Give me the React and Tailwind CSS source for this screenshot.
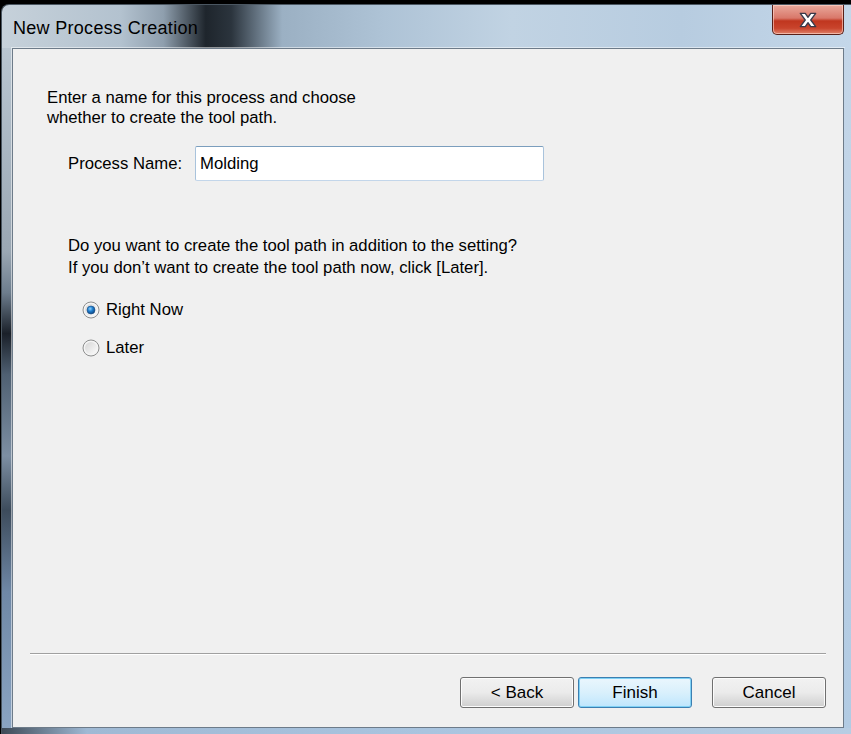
import React, { useState } from "react";

function Radio({ checked }) {
  return (
    <svg width="18" height="18" viewBox="0 0 18 18" className="shrink-0">
      <defs>
        <linearGradient id={checked ? "rb-on" : "rb-off"} x1="0" y1="0" x2="1" y2="1">
          <stop offset="0" stopColor="#d6d6d6" />
          <stop offset="1" stopColor="#fbfbfb" />
        </linearGradient>
        <radialGradient id="dot" cx="0.4" cy="0.35" r="0.7">
          <stop offset="0" stopColor="#8fd3ff" />
          <stop offset="0.45" stopColor="#1f7fcf" />
          <stop offset="1" stopColor="#0c3f7a" />
        </radialGradient>
      </defs>
      <circle cx="9" cy="9" r="8" fill="#f4f4f4" stroke="#8e8f8f" strokeWidth="1" />
      <circle cx="9" cy="9" r="6" fill={checked ? "url(#rb-on)" : "url(#rb-off)"} />
      {checked && <circle cx="9" cy="9" r="4" fill="url(#dot)" stroke="#1b4e85" strokeWidth="0.6" />}
    </svg>
  );
}

function Button({ children, primary }) {
  return (
    <button
      className={
        primary
          ? "w-[114px] h-[31px] rounded-[3px] border border-[#3c7fb1] bg-gradient-to-b from-[#eaf6fd] via-[#d9f0fc] to-[#bee6fd] text-[17px] text-black shadow-[inset_0_0_0_1px_#7fd1f5]"
          : "w-[114px] h-[31px] rounded-[3px] border border-[#707070] bg-gradient-to-b from-[#f2f2f2] via-[#ebebeb] to-[#cfcfcf] text-[17px] text-black shadow-[inset_0_0_0_1px_#fcfcfc]"
      }
    >
      {children}
    </button>
  );
}

export default function App() {
  const [choice, setChoice] = useState("now");

  return (
    <div
      className="w-[851px] h-[734px] bg-black overflow-hidden flex flex-col"
      style={{ fontFamily: '"Liberation Sans", Arial, sans-serif' }}
    >
      {/* window */}
      <div className="mt-[4px] ml-[1px] flex-1 flex flex-col rounded-tl-[8px] overflow-hidden border-l border-t border-[#4a5661] bg-[linear-gradient(90deg,#c6d1da_0%,#b3c2cf_14%,#8f9fae_19%,#1e252c_24%,#2b343d_27%,#9bb0c3_33%,#aec3d6_45%,#c1d3e3_60%,#b7cce0_80%,#c4d7e9_100%)]">
        {/* title bar */}
        <div className="h-[43px] flex items-start justify-between">
          <div className="pt-[13px] pl-[11px] text-[18px] leading-[20px] text-black tracking-[0.3px]">
            New Process Creation
          </div>
          <div className="mr-[7px] w-[72px] h-[30px] rounded-b-[5px] border border-t-0 border-[#5a2018] bg-[linear-gradient(180deg,#e9a99c_0%,#d9786a_45%,#c0361f_55%,#c9442c_80%,#e0826a_100%)] flex items-center justify-center shadow-[inset_0_0_0_1px_rgba(255,220,210,0.6)]">
            <svg width="22" height="18" viewBox="0 0 20 16">
              <path
                d="M3 2 L7.5 2 L10 5.5 L12.5 2 L17 2 L12.5 8 L17 14 L12.5 14 L10 10.5 L7.5 14 L3 14 L7.5 8 Z"
                fill="#ffffff"
                stroke="#3a3a4a"
                strokeWidth="1.2"
                strokeLinejoin="round"
              />
            </svg>
          </div>
        </div>

        {/* body row with frame edges */}
        <div className="flex-1 flex">
          <div className="w-[10px] bg-[linear-gradient(180deg,#b9c6d1_0%,#9aa7b3_30%,#6d7d8d_36%,#1a2029_42%,#4f6072_48%,#7d8fa3_60%,#3d4c5c_68%,#6f88a6_80%,#8aa4c2_100%)]" />
          <div className="flex-1 flex flex-col border border-[#6d7b89] shadow-[0_0_0_1px_rgba(255,255,255,0.5)] bg-[#f0f0f0]">
            <div className="pl-[34px] pt-[39px] text-[16.7px] leading-[20px] text-black">
              <p>
                Enter a name for this process and choose
                <br />
                whether to create the tool path.
              </p>

              <div className="mt-[18px] ml-[21px] flex items-center">
                <span>Process Name:</span>
                <div className="ml-[13px] w-[349px] h-[35px] rounded-[2px] border border-[#abadb3] border-t-[#7b9ebd] border-l-[#a9c3dc] border-r-[#a9c3dc] border-b-[#c3d6ea] bg-white flex items-center pl-[4px]">
                  Molding
                </div>
              </div>

              <p className="mt-[54px] ml-[21px] leading-[22px]">
                Do you want to create the tool path in addition to the setting?
                <br />
                If you don’t want to create the tool path now, click [Later].
              </p>

              <div className="mt-[21px] ml-[35px] flex flex-col gap-[18px]">
                <label className="flex items-center gap-[6px]" onClick={() => setChoice("now")}>
                  <Radio checked={choice === "now"} />
                  <span>Right Now</span>
                </label>
                <label className="flex items-center gap-[6px]" onClick={() => setChoice("later")}>
                  <Radio checked={choice === "later"} />
                  <span>Later</span>
                </label>
              </div>
            </div>

            <div className="flex-1" />

            <div className="mx-[17px] h-[2px] border-t border-[#a0a0a0] border-b border-b-white" />

            <div className="flex justify-end pr-[17px] pt-[22px] pb-[19px]">
              <Button>&lt; Back</Button>
              <div className="ml-[4px]">
                <Button primary>Finish</Button>
              </div>
              <div className="ml-[20px]">
                <Button>Cancel</Button>
              </div>
            </div>
          </div>
          <div className="w-[7px] bg-[linear-gradient(180deg,#c4d6e8,#b2cbe3)]" />
        </div>
        <div className="h-[6px] bg-[linear-gradient(90deg,#3e4a57_0%,#9fb9d4_10%,#a9c4df_50%,#b7cde3_100%)]" />
      </div>
    </div>
  );
}
